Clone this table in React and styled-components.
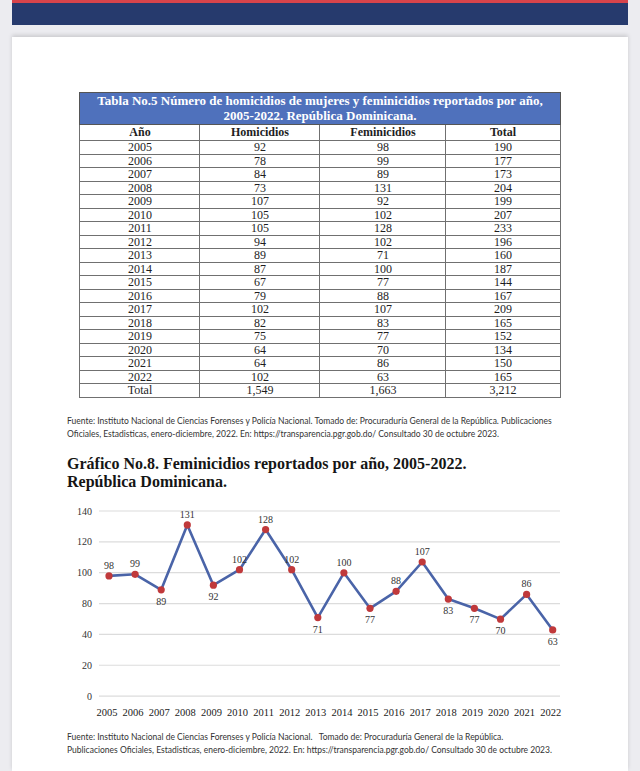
import React from "react";
import styled, { createGlobalStyle } from "styled-components";

const GlobalStyle = createGlobalStyle`
  html, body { margin: 0; padding: 0; background: #ececf0; }
  body { font-family: "Liberation Serif", serif; overflow: hidden; }
`;

const Shell = styled.div`
  padding: 0 12px;
`;

const TopBar = styled.div`
  height: 22px;
  background: #263a6d;
  border-top: 3px solid #d8444b;
`;

const Page = styled.div`
  margin-top: 12px;
  background: #ffffff;
  box-shadow: 0 -2px 4px rgba(0, 0, 0, 0.14);
  padding: 55px 0 14px;
`;

const Table = styled.table`
  width: 480px;
  margin: 0 auto;
  border-collapse: collapse;
  table-layout: fixed;
  font-family: "Liberation Serif", serif;
  color: #1e1e1e;
  border: 1px solid #666;
`;

const TitleCell = styled.th`
  background: #4f71bc;
  color: #ffffff;
  font-size: 13px;
  line-height: 15px;
  font-weight: bold;
  padding: 0 0 1px;
  height: 30px;
  border: 1px solid #555;
  text-align: center;
`;

const Cell = styled.td`
  border: 1px solid #707070;
  font-size: 12px;
  line-height: 12.5px;
  padding: 0;
  text-align: center;
  font-weight: ${(p) => (p.$head ? "bold" : "normal")};
  height: ${(p) => (p.$head ? "15px" : "12.5px")};
`;

const Note = styled.p`
  margin: ${(p) => p.$top} 0 0 55px;
  font-family: Lato, "Open Sans", sans-serif;
  font-size: 8.5px;
  line-height: 13px;
  color: #333;
  white-space: nowrap;
`;

const Heading = styled.h2`
  margin: 14px 0 0 55px;
  font-family: "Liberation Serif", serif;
  font-size: 16px;
  line-height: 18px;
  font-weight: bold;
  color: #151515;
`;

const ChartSvg = styled.svg`
  display: block;
  margin: 10px 0 0 48px;
  overflow: visible;
`;

const rows = [
  ["2005", "92", "98", "190"],
  ["2006", "78", "99", "177"],
  ["2007", "84", "89", "173"],
  ["2008", "73", "131", "204"],
  ["2009", "107", "92", "199"],
  ["2010", "105", "102", "207"],
  ["2011", "105", "128", "233"],
  ["2012", "94", "102", "196"],
  ["2013", "89", "71", "160"],
  ["2014", "87", "100", "187"],
  ["2015", "67", "77", "144"],
  ["2016", "79", "88", "167"],
  ["2017", "102", "107", "209"],
  ["2018", "82", "83", "165"],
  ["2019", "75", "77", "152"],
  ["2020", "64", "70", "134"],
  ["2021", "64", "86", "150"],
  ["2022", "102", "63", "165"],
  ["Total", "1,549", "1,663", "3,212"],
];

const series = [
  [98, "a"], [99, "a"], [89, "b"], [131, "a"], [92, "b"], [102, "a"],
  [128, "a"], [102, "a"], [71, "b"], [100, "a"], [77, "b"], [88, "a"],
  [107, "a"], [83, "b"], [77, "b"], [70, "b"], [86, "a"], [63, "b"],
];

const yLabels = ["140", "120", "100", "80", "40", "20", "0"];

function Chart() {
  const px = (i) => 49 + 26.1 * i;
  const py = (v) => 10 + (140 - v) * 1.545;
  const pts = series.map(([v], i) => `${px(i).toFixed(1)},${py(v).toFixed(1)}`).join(" ");
  return (
    <ChartSvg width="520" height="220" viewBox="0 0 520 220">
      {yLabels.map((l, i) => {
        const y = 10 + i * 30.85;
        return (
          <g key={l}>
            <line x1="39" x2="500" y1={y} y2={y} stroke="#dcdcdc" strokeWidth="1.2" />
            <text x="32" y={y + 3.5} textAnchor="end" fontSize="10" fontFamily="Liberation Serif, serif" fill="#333">
              {l}
            </text>
          </g>
        );
      })}
      <polyline points={pts} fill="none" stroke="#4a64a8" strokeWidth="2.6" strokeLinejoin="round" />
      {series.map(([v, pos], i) => (
        <g key={i}>
          <circle cx={px(i)} cy={py(v)} r="3.6" fill="#c0393b" />
          <text
            x={px(i)}
            y={pos === "a" ? py(v) - 7 : py(v) + 15}
            textAnchor="middle"
            fontSize="10"
            fontFamily="Liberation Serif, serif"
            fill="#333"
          >
            {v}
          </text>
        </g>
      ))}
      {series.map((_, i) => (
        <text
          key={"y" + i}
          x={px(i) - 2}
          y="215"
          textAnchor="middle"
          fontSize="10.5"
          fontFamily="Liberation Serif, serif"
          fill="#222"
        >
          {2005 + i}
        </text>
      ))}
    </ChartSvg>
  );
}

export default function App() {
  return (
    <>
      <GlobalStyle />
      <Shell>
        <TopBar />
        <Page>
          <Table>
            <colgroup>
              <col style={{ width: "120px" }} />
              <col style={{ width: "120px" }} />
              <col style={{ width: "126px" }} />
              <col style={{ width: "114px" }} />
            </colgroup>
            <thead>
              <tr>
                <TitleCell colSpan={4}>
                  Tabla No.5 Número de homicidios de mujeres y feminicidios reportados por año,
                  <br />
                  2005-2022. República Dominicana.
                </TitleCell>
              </tr>
              <tr>
                <Cell $head>Año</Cell>
                <Cell $head>Homicidios</Cell>
                <Cell $head>Feminicidios</Cell>
                <Cell $head>Total</Cell>
              </tr>
            </thead>
            <tbody>
              {rows.map((r) => (
                <tr key={r[0]}>
                  {r.map((c, j) => (
                    <Cell key={j}>{c}</Cell>
                  ))}
                </tr>
              ))}
            </tbody>
          </Table>
          <Note $top="17px">
            Fuente: Instituto Nacional de Ciencias Forenses y Policía Nacional. Tomado de: Procuraduría General de la República. Publicaciones
            <br />
            Oficiales, Estadisticas, enero-diciembre, 2022. En: https://transparencia.pgr.gob.do/ Consultado 30 de octubre 2023.
          </Note>
          <Heading>
            Gráfico No.8. Feminicidios reportados por año, 2005-2022.
            <br />
            República Dominicana.
          </Heading>
          <Chart />
          <Note $top="10px">
            Fuente: Instituto Nacional de Ciencias Forenses y Policía Nacional.&nbsp;&nbsp; Tomado de: Procuraduría General de la República.
            <br />
            Publicaciones Oficiales, Estadisticas, enero-diciembre, 2022. En: https://transparencia.pgr.gob.do/ Consultado 30 de octubre 2023.
          </Note>
        </Page>
      </Shell>
    </>
  );
}
